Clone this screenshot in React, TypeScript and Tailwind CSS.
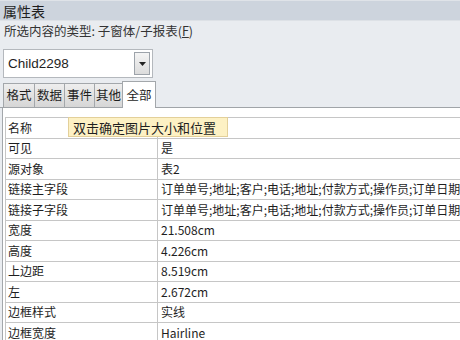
import React from 'react';

const rows: [string, string][] = [
    ['名称', ''],
    ['可见', '是'],
    ['源对象', '表2'],
    ['链接主字段', '订单单号;地址;客户;电话;地址;付款方式;操作员;订单日期;'],
    ['链接子字段', '订单单号;地址;客户;电话;地址;付款方式;操作员;订单日期;'],
    ['宽度', '21.508cm'],
    ['高度', '4.226cm'],
    ['上边距', '8.519cm'],
    ['左', '2.672cm'],
    ['边框样式', '实线'],
    ['边框宽度', 'Hairline'],
];

const tabs: { label: string; w: string }[] = [
    { label: '格式', w: 'w-[31px]' },
    { label: '数据', w: 'w-[30px]' },
    { label: '事件', w: 'w-[30px]' },
    { label: '其他', w: 'w-[28px]' },
];

const App: React.FC = () => {
    return (
        <div
            className="w-[460px] h-[340px] overflow-hidden bg-[#e9ecf0] text-[#1e1e1e] flex flex-col"
            style={{ fontFamily: '"Noto Sans CJK SC", "Noto Sans", sans-serif' }}
        >
            {/* title bar */}
            <div className="h-[21px] shrink-0 bg-[#cdd4dd] border-t border-[#dfe3e8] border-b border-b-[#dde1e6] flex items-center px-[3px] text-[14px] leading-none">
                属性表
            </div>

            <div className="h-[21px] shrink-0 flex items-center px-[4px] text-[12.5px] leading-none text-[#333]">
                所选内容的类型: 子窗体/子报表(<span className="underline">F</span>)
            </div>

            {/* combo box */}
            <div className="px-[3px] pt-[7px] shrink-0">
                <div className="w-[150px] h-[29px] bg-white border border-[#b4b8bd] flex items-center justify-between pl-[4px] pr-[2px]">
                    <span className="text-[13.5px] leading-none" style={{ fontFamily: '"Liberation Sans", Arial, sans-serif' }}>Child2298</span>
                    <div className="w-[16px] h-[23px] border border-[#9da3aa] bg-gradient-to-b from-[#f4f4f4] to-[#dcdcdc] flex items-center justify-center">
                        <svg width="7" height="4" viewBox="0 0 7 4">
                            <path d="M0 0h7L3.5 4z" fill="#222" />
                        </svg>
                    </div>
                </div>
            </div>

            {/* tabs */}
            <div className="flex items-end pl-[3px] h-[30px] shrink-0 border-b border-[#a0a4a8]">
                {tabs.map((t) => (
                    <div
                        key={t.label}
                        className={`${t.w} h-[24px] flex items-center justify-center bg-gradient-to-b from-[#eeeeee] to-[#d6d6d6] border border-b-0 border-r-0 border-[#a3a7ab] text-[12.5px] leading-none`}
                    >
                        {t.label}
                    </div>
                ))}
                <div className="w-[34px] h-[27px] -mb-px flex items-center justify-center bg-white border border-b-0 border-[#a3a7ab] text-[12.5px] leading-none">
                    全部
                </div>
            </div>

            {/* panel */}
            <div className="flex-1 bg-white border-l border-[#a3a7ab] ml-[2px] pt-[9px] pl-[2px] relative">
                <div className="border-l border-t border-[#c6c6c6]">
                    {rows.map(([k, v]) => (
                        <div key={k} className="h-[20.5px] flex border-b border-[#c6c6c6] text-[12px] leading-none">
                            <div className="w-[152px] shrink-0 border-r border-[#c6c6c6] flex items-center pl-[2px]">{k}</div>
                            <div className="flex-1 flex items-center pl-[3px] whitespace-nowrap overflow-hidden">{v}</div>
                        </div>
                    ))}
                </div>

                {/* tooltip */}
                <div className="absolute left-[65px] top-[9px] w-[160px] h-[20px] bg-[#fdf1c4] border border-[#e3d09a] flex items-center pl-[4px] text-[13px] leading-none">
                    双击确定图片大小和位置
                </div>
            </div>
        </div>
    );
};

export default App;
